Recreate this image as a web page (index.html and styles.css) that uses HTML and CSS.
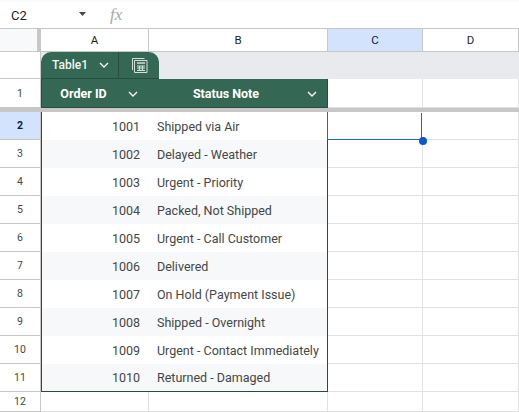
FILE: index.html
```html
<!DOCTYPE html>
<html lang="en">
<head>
<meta charset="utf-8">
<title>Table1</title>
<link rel="stylesheet" href="styles.css">
</head>
<body>
<div class="formula-bar">
  <span class="name-box">C2</span>
  <svg class="caret" width="7" height="4" viewBox="0 0 7 4"><path d="M0 0h7L3.500 4z"/></svg>
  <span class="fx">fx</span>
</div>
<div class="row col-heads">
  <div class="corner"></div>
  <div class="ch a">A</div><div class="ch b">B</div><div class="ch c sel">C</div><div class="ch d">D</div>
</div>
<div class="row tab-row">
  <div class="rh"></div>
  <div class="tab-band">
    <div class="tab">
      <div class="tab-name">Table1
        <svg class="chev" width="10" height="6" viewBox="0 0 10 6"><path d="M1 1l4 4 4-4"/></svg>
      </div>
      <div class="tab-icon">
        <svg width="17" height="16" viewBox="0 0 17 16" fill="none" stroke="#d5e0da" stroke-width="1"><path d="M1.500 13V1.500h12"/><path d="M3.500 15.500V3.500h12.500v12z"/><path d="M6 6h8" stroke-width="1.500"/><path d="M6 9h8M6 11h8M6 13.500h8M8.500 9v5M11.500 9v5" stroke-width="1.200"/></svg>
      </div>
    </div>
  </div>
</div>
<div class="row r-1">
  <div class="rh">1</div>
  <div class="th a">Order ID<svg class="chev" width="10" height="6" viewBox="0 0 10 6"><path d="M1 1l4 4 4-4"/></svg></div>
  <div class="th b">Status Note<svg class="chev" width="10" height="6" viewBox="0 0 10 6"><path d="M1 1l4 4 4-4"/></svg></div>
  <div class="cell c"></div><div class="cell d"></div>
</div>
<div class="freeze"></div>
<div class="row"><div class="rh sel">2</div><div class="td num a">1001</div><div class="td txt b edge">Shipped via Air</div><div class="cell c active"><i class="handle"></i></div><div class="cell d"></div></div>
<div class="row alt"><div class="rh">3</div><div class="td num a">1002</div><div class="td txt b">Delayed - Weather</div><div class="cell c"></div><div class="cell d"></div></div>
<div class="row"><div class="rh">4</div><div class="td num a">1003</div><div class="td txt b">Urgent - Priority</div><div class="cell c"></div><div class="cell d"></div></div>
<div class="row alt"><div class="rh">5</div><div class="td num a">1004</div><div class="td txt b">Packed, Not Shipped</div><div class="cell c"></div><div class="cell d"></div></div>
<div class="row"><div class="rh">6</div><div class="td num a">1005</div><div class="td txt b">Urgent - Call Customer</div><div class="cell c"></div><div class="cell d"></div></div>
<div class="row alt"><div class="rh">7</div><div class="td num a">1006</div><div class="td txt b">Delivered</div><div class="cell c"></div><div class="cell d"></div></div>
<div class="row"><div class="rh">8</div><div class="td num a">1007</div><div class="td txt b">On Hold (Payment Issue)</div><div class="cell c"></div><div class="cell d"></div></div>
<div class="row alt"><div class="rh">9</div><div class="td num a">1008</div><div class="td txt b">Shipped - Overnight</div><div class="cell c"></div><div class="cell d"></div></div>
<div class="row"><div class="rh">10</div><div class="td num a">1009</div><div class="td txt b">Urgent - Contact Immediately</div><div class="cell c"></div><div class="cell d"></div></div>
<div class="row alt last"><div class="rh">11</div><div class="td num a">1010</div><div class="td txt b">Returned - Damaged</div><div class="cell c"></div><div class="cell d"></div></div>
<div class="row r-12"><div class="rh">12</div><div class="cell a"></div><div class="cell b"></div><div class="cell c"></div><div class="cell d"></div></div>
</body>
</html>
```
FILE: styles.css
```css
* { box-sizing: border-box; }
html, body { margin: 0; padding: 0; background: #fff; overflow: hidden; }
body { width: 519px; height: 412px; font-family: Roboto, "Liberation Sans", sans-serif; color: #444746; }

.formula-bar {
  height: 29px; display: flex; align-items: center; position: relative;
  border-top: 2px solid #f9fbfd; border-bottom: 1px solid #c7c7c7;
}
.name-box { width: 79px; padding-left: 11px; font-size: 13px; color: #1f1f1f; }
.caret { fill: #444746; margin-right: 24px; margin-bottom: 2px; }
.fx { font-family: "Liberation Serif", serif; font-style: italic; font-size: 17px; color: #a8a8a8; }

.row { display: flex; height: 28px; }
.a { width: 108px; flex: none; }
.b { width: 179px; flex: none; }
.c { width: 95px; flex: none; }
.d { width: 96px; flex: none; }

.col-heads { height: 23px; border-bottom: 1px solid #c7c7c7; }
.corner { width: 41px; flex: none; background: #f8f9fa; border-right: 4px solid #c7c7c7; }
.ch {
  display: flex; align-items: center; justify-content: center;
  font-size: 11.500px; color: #1f1f1f; border-right: 1px solid #c7c7c7;
}
.ch.sel { background: #d3e3fd; color: #041e49; }

.rh {
  width: 41px; flex: none; display: flex; align-items: center; justify-content: center;
  font-size: 10.500px; color: #444746; background: #fff;
  border-right: 1px solid #c7c7c7; border-bottom: 1px solid #c7c7c7;
}
.rh.sel { background: #d3e3fd; color: #041e49; font-weight: 700; }

.tab-row { height: 27px; }
.tab-band { flex: 1; background: #e8eaed; display: flex; align-items: stretch; }
.tab {
  display: flex; height: 27px; background: #356854; color: #fff;
  border-radius: 10px 10px 0 0; border-bottom: 1px solid #274e3f;
}
.tab-name {
  width: 78px; display: flex; align-items: center; gap: 11px; padding-left: 11px;
  font-size: 12px; font-weight: 500; border-right: 1px solid #274e3f; color: #f1f5f3;
}
.tab-icon { width: 40px; display: flex; align-items: center; justify-content: center; }
.chev { fill: none; stroke: #fff; stroke-width: 1.300; flex: none; }

.r-1 { height: 29px; }
.th {
  background: #356854; color: #fff; font-size: 12.500px; font-weight: 700;
  display: flex; align-items: center; justify-content: center; position: relative;
  border-bottom: 1px solid #274e3f; padding-right: 24px;
}
.th.a { border-left: 1px solid #274e3f; }
.th.b { border-right: 1px solid #274e3f; }
.th .chev { position: absolute; right: 11px; top: 12px; }
.th.b .chev { right: 10px; }

.freeze { height: 4px; background: #c7c7c7; }

.cell { border-right: 1px solid #e1e1e1; border-bottom: 1px solid #e1e1e1; position: relative; }
.td { font-size: 12.500px; display: flex; align-items: center; color: #444746; border-bottom: 0; }
.num { justify-content: flex-end; padding-right: 9px; border-left: 1px solid #2b4a3e; }
.txt { padding-left: 8px; border-right: 1px solid #2b4a3e; white-space: nowrap; }
.txt.edge { border-right-color: #1a66d2; }
.alt .td { background: #f6f8f9; }
.last .td { border-bottom: 1px solid #2b4a3e; }

.active { border-right: 0; border-bottom: 1px solid #1a66d2; }
.active::after {
  content: ""; position: absolute; top: 1px; bottom: 0; right: 1px;
  border-right: 1px solid #1a66d2;
}
.handle {
  position: absolute; right: -4px; bottom: -6px; width: 8px; height: 8px;
  border-radius: 50%; background: #0b57d0; z-index: 2;
}
.r-12 { height: 20px; }
.r-12 .rh { border-bottom: 1px solid #c7c7c7; }
```
